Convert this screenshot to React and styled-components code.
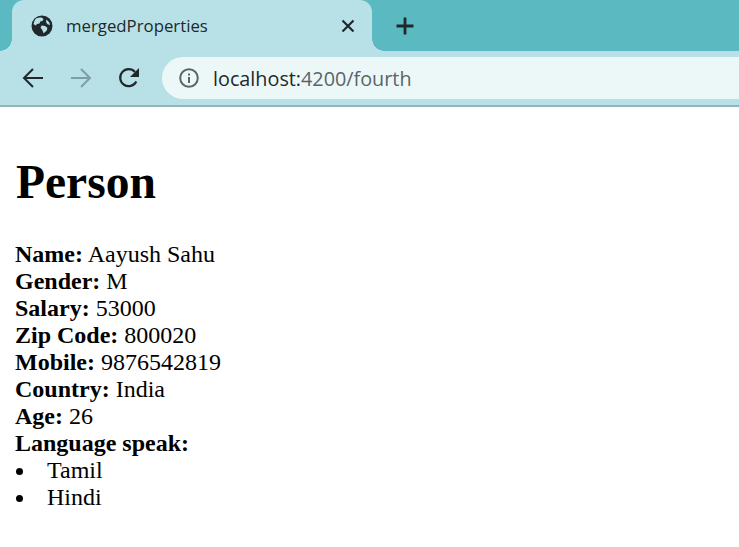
import React from 'react'
import styled, { createGlobalStyle } from 'styled-components'

const Global = createGlobalStyle`
  html, body { margin: 0; padding: 0; background: #fff; }
  body { width: 739px; height: 547px; overflow: hidden; }
`

// Browser chrome
const TabStrip = styled.div`
  height: 51px;
  background: #5bb9c1;
  display: flex;
  align-items: flex-end;
  padding-left: 12px;
`
const Tab = styled.div`
  position: relative;
  width: 360px;
  height: 51px;
  box-sizing: border-box;
  padding: 0 16px 0 19px;
  background: #b7e1e6;
  border-radius: 12px 12px 0 0;
  display: flex;
  align-items: center;
  &::before, &::after {
    content: '';
    position: absolute;
    bottom: 0;
    width: 12px;
    height: 12px;
  }
  &::before {
    left: -12px;
    background: radial-gradient(circle at 0 0, #5bb9c1 11.5px, #b7e1e6 12px);
  }
  &::after {
    right: -12px;
    background: radial-gradient(circle at 100% 0, #5bb9c1 11.5px, #b7e1e6 12px);
  }
`
const TabTitle = styled.span`
  flex: 1;
  margin-left: 13px;
  font-family: "Open Sans", sans-serif;
  font-size: 16.8px;
  color: #20282c;
`
const NewTab = styled.div`
  margin-left: 23px;
  height: 51px;
  display: flex;
  align-items: center;
`
const Toolbar = styled.div`
  height: 54px;
  background: #b7e1e6;
  display: flex;
  align-items: center;
  padding-left: 21px;
`
const Divider = styled.div`
  height: 2px;
  background: #93b5b9;
`
const NavButton = styled.div`
  width: 24px;
  height: 24px;
  margin-right: 24px;
  display: flex;
  align-items: center;
  justify-content: center;
`
const AddressBar = styled.div`
  flex: 1;
  height: 42px;
  margin-left: -3px;
  padding-left: 17px;
  background: #ecf8f8;
  border-radius: 21px 0 0 21px;
  display: flex;
  align-items: center;
`
const Url = styled.span`
  margin-left: 14px;
  font-family: "Open Sans", sans-serif;
  font-size: 19.8px;
  color: #5b6468;
`
const Host = styled.span`
  color: #20282c;
`

// Page content
const Page = styled.main`
  padding: 0 15px;
  font-family: "Liberation Serif", "Times New Roman", serif;
  font-size: 24px;
  line-height: 27px;
  color: #000;
`
const Heading = styled.h1`
  margin: 0;
  padding: 48px 0 0 1px;
  font-size: 47.5px;
  line-height: 55px;
  font-weight: bold;
`
const Fields = styled.div`
  margin-top: 31px;
`
const Field = styled.div`
  height: 27px;
`
const Languages = styled.ul`
  margin: 0;
  padding: 0;
  list-style: none;
`
const Language = styled.li`
  display: flex;
  align-items: center;
  height: 27px;
  &::before {
    content: '';
    width: 7px;
    height: 7px;
    margin: 2px 24px 0 1px;
    border-radius: 50%;
    background: #000;
  }
`

const Globe = () => (
  <svg width="22" height="22" viewBox="0 0 22 22">
    <circle cx="11" cy="11" r="10.5" fill="#20282c" />
    <path d="M5 3.5c2-1 4-1.2 6-.8l1.5 1.3-1 2-2.3.6-.7 2-2.3.3-1.7 1.6-2-1.6C3 7 3.5 5 5 3.5zM10.5 10.5l3.5.4 2.4 1.8-.6 2.8-2.3 2-1 .8-1.300-3.500-1.600-2zM15.500 4.500l2.800 3 .7 2.500-2.500-.7-1.500-2.300z" fill="#b7e1e6" />
  </svg>
)
const Close = () => (
  <svg width="16" height="16" viewBox="0 0 16 16">
    <path d="M2.500 2.500l11 11M13.500 2.500l-11 11" stroke="#20282c" strokeWidth="2.200" fill="none" />
  </svg>
)
const Plus = () => (
  <svg width="20" height="20" viewBox="0 0 20 20">
    <path d="M10 1.500v17M1.500 10h17" stroke="#20282c" strokeWidth="2.800" fill="none" />
  </svg>
)
const Arrow = ({ color, flip }) => (
  <svg width="22" height="22" viewBox="0 0 22 22" style={flip ? { transform: 'scaleX(-1)' } : undefined}>
    <path d="M21 11H2M11 2l-9 9 9 9" stroke={color} strokeWidth="2" fill="none" />
  </svg>
)
const Reload = () => (
  <svg width="22" height="22" viewBox="0 0 22 22">
    <path d="M18.300 14.500A8.500 8.500 0 1 1 17 5" stroke="#20282c" strokeWidth="2.200" fill="none" />
    <path d="M21 1v9h-9z" fill="#20282c" />
  </svg>
)
const Info = () => (
  <svg width="20" height="20" viewBox="0 0 20 20">
    <circle cx="10" cy="10" r="8.800" stroke="#5b6468" strokeWidth="2" fill="none" />
    <path d="M9 9h2v6H9zM9 5.500h2v2H9z" fill="#5b6468" />
  </svg>
)

const fields = [
  ['Name:', 'Aayush Sahu'],
  ['Gender:', 'M'],
  ['Salary:', '53000'],
  ['Zip Code:', '800020'],
  ['Mobile:', '9876542819'],
  ['Country:', 'India'],
  ['Age:', '26'],
]

export default function App() {
  return (
    <>
      <Global />
      <TabStrip>
        <Tab>
          <Globe />
          <TabTitle>mergedProperties</TabTitle>
          <Close />
        </Tab>
        <NewTab>
          <Plus />
        </NewTab>
      </TabStrip>
      <Toolbar>
        <NavButton><Arrow color="#20282c" /></NavButton>
        <NavButton><Arrow color="#7f9ea3" flip /></NavButton>
        <NavButton><Reload /></NavButton>
        <AddressBar>
          <Info />
          <Url><Host>localhost:</Host>4200/fourth</Url>
        </AddressBar>
      </Toolbar>
      <Divider />
      <Page>
        <Heading>Person</Heading>
        <Fields>
          {fields.map(([label, value]) => (
            <Field key={label}><b>{label}</b> {value}</Field>
          ))}
          <Field><b>Language speak:</b></Field>
          <Languages>
            <Language>Tamil</Language>
            <Language>Hindi</Language>
          </Languages>
        </Fields>
      </Page>
    </>
  )
}
